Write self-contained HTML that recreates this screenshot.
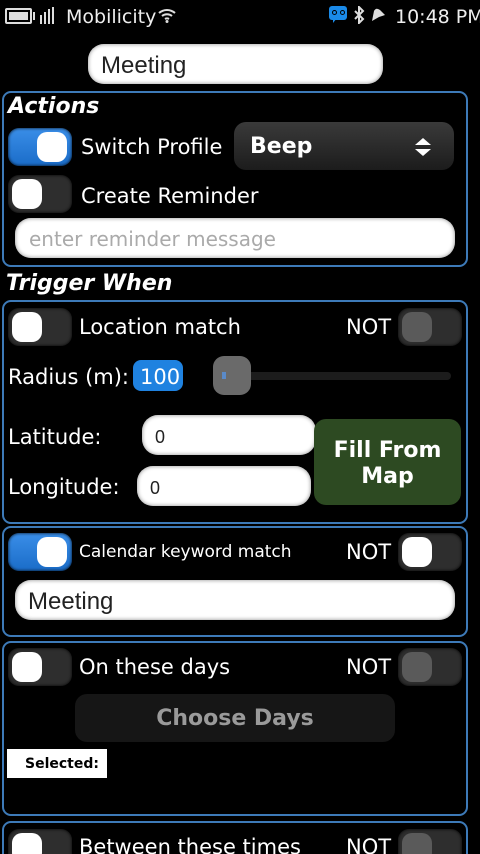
<!DOCTYPE html>
<html style="overflow:hidden;height:854px"><head><meta charset="utf-8"><style>
*{margin:0;padding:0;box-sizing:border-box}
body{width:480px;height:854px;background:#000;overflow:hidden;position:relative;font-family:"DejaVu Sans","Liberation Sans",sans-serif;color:#fff}
.a{position:absolute}
.panel{position:absolute;left:2px;width:466px;border:2px solid #3d7ab8;border-radius:9px}
.tg{position:absolute;width:64px;height:38px;border-radius:11px;background:#2e2e2e;box-shadow:inset 0 0 3px #000}
.tg.on{background:linear-gradient(#3a8ee8,#1a6cc8)}
.tg .k{position:absolute;top:4px;width:30px;height:30px;border-radius:10px;background:#fff}
.tg.on .k{left:29px}.tg .k{left:4px}
.tg .k.g{background:#5a5a5a}
.field{position:absolute;background:#fff;border-radius:16px;box-shadow:inset 0 0 4px #888;color:#222;font-family:"Liberation Sans",sans-serif}
.t{position:absolute;font-size:21px;line-height:1;white-space:nowrap}
</style></head><body>
<div class="a" style="left:5px;top:8px;width:27px;height:16px;border:2px solid #ddd;border-radius:2px"><div style="position:absolute;left:2px;top:2px;width:19px;height:8px;background:#ddd"></div></div>
<div class="a" style="left:33px;top:12px;width:2px;height:8px;background:#ddd"></div>
<div class="a" style="left:40px;top:15px;width:2px;height:9px;background:#ddd"></div>
<div class="a" style="left:44px;top:12px;width:2px;height:12px;background:#ddd"></div>
<div class="a" style="left:48px;top:9px;width:2px;height:15px;background:#ddd"></div>
<div class="a" style="left:52px;top:7px;width:2px;height:17px;background:#ddd"></div>
<div class="t" style="left:66px;top:8px;font-size:19px;color:#eee">Mobilicity</div>
<svg class="a" style="left:158px;top:7px" width="18" height="16" viewBox="0 0 18 16"><path d="M1 6a12 12 0 0 1 16 0M4 9a8 8 0 0 1 10 0M7 12a4 4 0 0 1 4 0" stroke="#ddd" stroke-width="2" fill="none"/><circle cx="9" cy="14.5" r="1.5" fill="#ddd"/></svg>
<div class="a" style="left:329px;top:6px;width:18px;height:14px;background:#1a8ae8;border-radius:3px"></div>
<div class="a" style="left:333px;top:18px;width:0;height:0;border-left:4px solid #1a8ae8;border-bottom:5px solid transparent"></div>
<div class="a" style="left:332px;top:10px;width:5px;height:5px;border:1.5px solid #000;border-radius:50%"></div>
<div class="a" style="left:340px;top:10px;width:5px;height:5px;border:1.5px solid #000;border-radius:50%"></div>
<svg class="a" style="left:353px;top:6px" width="12" height="18" viewBox="0 0 12 18"><path d="M2 5l8 8-4 4V1l4 4-8 8" stroke="#ddd" stroke-width="2" fill="none"/></svg>
<svg class="a" style="left:370px;top:7px" width="16" height="16" viewBox="0 0 16 16"><path d="M2 14L4 4Q6 0 10 3L15 8 9 10Z" fill="#ddd"/></svg>
<div class="t" style="left:395px;top:8px;font-size:19px;color:#eee">10:48 PM</div>

<div class="field" style="left:88px;top:44px;width:295px;height:40px"><div class="t" style="left:13px;top:10px;font-size:24px">Meeting</div></div>

<div class="panel" style="top:91px;height:176px"></div>
<div class="t" style="left:8px;top:96px;font-size:22px;font-weight:bold;font-style:italic">Actions</div>
<div class="tg on" style="left:8px;top:128px"><div class="k"></div></div>
<div class="t" style="left:81px;top:137px">Switch Profile</div>
<div class="a" style="left:234px;top:122px;width:220px;height:48px;border-radius:12px;background:linear-gradient(#3a3a3a,#1c1c1c)"></div>
<div class="t" style="left:250px;top:136px;font-size:22px;font-weight:bold">Beep</div>
<div class="a" style="left:415px;top:138px;border-left:8px solid transparent;border-right:8px solid transparent;border-bottom:7px solid #fff"></div>
<div class="a" style="left:415px;top:149px;border-left:8px solid transparent;border-right:8px solid transparent;border-top:7px solid #fff"></div>
<div class="tg" style="left:8px;top:175px"><div class="k"></div></div>
<div class="t" style="left:81px;top:186px">Create Reminder</div>
<div class="field" style="left:15px;top:218px;width:440px;height:40px"><div class="t" style="left:14px;top:11px;font-size:20px;color:#aaa;font-family:'DejaVu Sans',sans-serif">enter reminder message</div></div>

<div class="t" style="left:6px;top:273px;font-size:22px;font-weight:bold;font-style:italic">Trigger When</div>

<div class="panel" style="top:300px;height:224px"></div>
<div class="tg" style="left:8px;top:308px"><div class="k"></div></div>
<div class="t" style="left:79px;top:317px">Location match</div>
<div class="t" style="left:346px;top:317px">NOT</div>
<div class="tg" style="left:398px;top:308px"><div class="k g"></div></div>
<div class="t" style="left:8px;top:367px">Radius (m):</div>
<div class="a" style="left:133px;top:360px;width:50px;height:31px;border-radius:8px;background:#1f82e0"></div>
<div class="t" style="left:140px;top:367px">100</div>
<div class="a" style="left:213px;top:372px;width:238px;height:8px;border-radius:4px;background:#1c1c1c"></div>
<div class="a" style="left:213px;top:356px;width:38px;height:39px;border-radius:11px;background:#6a6a6a"></div>
<div class="a" style="left:222px;top:372px;width:4px;height:7px;background:#5a8ac8"></div>
<div class="t" style="left:8px;top:427px">Latitude:</div>
<div class="field" style="left:142px;top:415px;width:174px;height:40px"><div class="t" style="left:13px;top:13px;font-size:18px">0</div></div>
<div class="t" style="left:8px;top:477px">Longitude:</div>
<div class="field" style="left:137px;top:466px;width:174px;height:40px"><div class="t" style="left:13px;top:13px;font-size:18px">0</div></div>
<div class="a" style="left:314px;top:419px;width:147px;height:86px;border-radius:12px;background:#2d4a22"></div>
<div class="a" style="left:314px;top:438px;width:147px;text-align:center;font-size:22px;font-weight:bold;line-height:26px">Fill From<br>Map</div>

<div class="panel" style="top:526px;height:111px"></div>
<div class="tg on" style="left:8px;top:533px"><div class="k"></div></div>
<div class="t" style="left:79px;top:544px;font-size:17px">Calendar keyword match</div>
<div class="t" style="left:346px;top:542px">NOT</div>
<div class="tg" style="left:398px;top:533px"><div class="k"></div></div>
<div class="field" style="left:15px;top:580px;width:440px;height:40px"><div class="t" style="left:13px;top:10px;font-size:24px">Meeting</div></div>

<div class="panel" style="top:641px;height:175px"></div>
<div class="tg" style="left:8px;top:648px"><div class="k"></div></div>
<div class="t" style="left:79px;top:657px">On these days</div>
<div class="t" style="left:346px;top:657px">NOT</div>
<div class="tg" style="left:398px;top:648px"><div class="k g"></div></div>
<div class="a" style="left:75px;top:694px;width:320px;height:48px;border-radius:12px;background:#161616"></div>
<div class="a" style="left:75px;top:706px;width:320px;text-align:center;font-size:22px;font-weight:bold;color:#9a9a9a">Choose Days</div>
<div class="a" style="left:7px;top:749px;width:100px;height:29px;background:#fff"></div>
<div class="t" style="left:25px;top:757px;font-size:14px;font-weight:bold;color:#000">Selected:</div>

<div class="panel" style="top:821px;height:50px"></div>
<div class="tg" style="left:8px;top:829px"><div class="k"></div></div>
<div class="t" style="left:79px;top:837px">Between these times</div>
<div class="t" style="left:346px;top:837px">NOT</div>
<div class="tg" style="left:398px;top:829px"><div class="k g"></div></div>
</body></html>
